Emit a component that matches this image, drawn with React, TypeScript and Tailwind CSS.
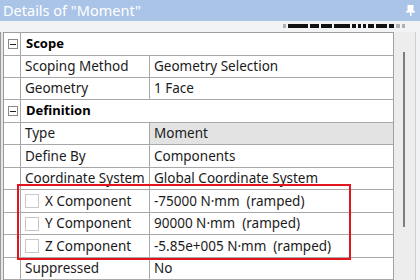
import React from "react";

type Row =
  | { kind: "group"; label: string; h: string }
  | { kind: "prop"; label: string; value: string; h: string; check?: boolean; shaded?: boolean };

const rows: Row[] = [
  { kind: "group", label: "Scope", h: "h-[23px]" },
  { kind: "prop", label: "Scoping Method", value: "Geometry Selection", h: "h-[22px]" },
  { kind: "prop", label: "Geometry", value: "1 Face", h: "h-[22px]" },
  { kind: "group", label: "Definition", h: "h-[23px]" },
  { kind: "prop", label: "Type", value: "Moment", h: "h-[22px]", shaded: true },
  { kind: "prop", label: "Define By", value: "Components", h: "h-[23px]" },
  { kind: "prop", label: "Coordinate System", value: "Global Coordinate System", h: "h-[22px]" },
  { kind: "prop", label: "X Component", value: "-75000 N·mm  (ramped)", h: "h-[23px]", check: true },
  { kind: "prop", label: "Y Component", value: "90000 N·mm  (ramped)", h: "h-[22px]", check: true },
  { kind: "prop", label: "Z Component", value: "-5.85e+005 N·mm  (ramped)", h: "h-[23px]", check: true },
  { kind: "prop", label: "Suppressed", value: "No", h: "h-[22px]" },
];

// black dashes of the busy bar under the title
const dashes = [
  { w: "w-[3px]", c: "bg-[#b0b0b0]" },
  { w: "w-[20px]", c: "bg-[#111]" },
  { w: "w-[9px]", c: "bg-[#111]" },
  { w: "w-[11px]", c: "bg-[#111]" },
  { w: "w-[16px]", c: "bg-[#111]" },
  { w: "w-[4px]", c: "bg-[#111]" },
  { w: "w-[3px]", c: "bg-[#111]" },
  { w: "w-[3px]", c: "bg-[#111]" },
  { w: "w-[6px]", c: "bg-[#111]" },
  { w: "w-[11px]", c: "bg-[#111]" },
  { w: "w-[5px]", c: "bg-[#111]" },
  { w: "w-[4px]", c: "bg-[#b0b0b0]" },
  { w: "w-[3px]", c: "bg-[#b0b0b0]" },
];

function Pin() {
  return (
    <svg width="9" height="11" viewBox="0 0 9 11" className="shrink-0">
      <rect x="2" y="0.5" width="5" height="6" fill="white" stroke="white" />
      <rect x="0" y="6" width="9" height="1.5" fill="white" />
      <rect x="4" y="7" width="1.5" height="4" fill="white" />
    </svg>
  );
}

function Minus() {
  return (
    <div className="w-[10px] h-[10px] border border-[#8a8a8a] bg-white flex items-center justify-center">
      <div className="w-[6px] h-[1px] bg-[#222]" />
    </div>
  );
}

export default function App() {
  return (
    <div
      className="w-[420px] h-[280px] overflow-hidden bg-[#f2f3f5] relative"
      style={{ fontFamily: '"Noto Sans", "Open Sans", sans-serif' }}
    >
      {/* Title bar */}
      <div className="h-[21px] bg-[#a9c4e6] flex items-center justify-between pl-[3px] pr-[5px]">
        <span className="text-white text-[14.5px] leading-none">Details of "Moment"</span>
        <Pin />
      </div>

      {/* Busy strip */}
      <div className="h-[11px] pt-[3px] pl-[283px]">
        <div className="flex gap-[2px]">
          {dashes.map((d, i) => (
            <div key={i} className={`${d.w} ${d.c} h-[4px]`} />
          ))}
        </div>
      </div>

      {/* Body */}
      <div className="flex">
        <div className="w-[4px] h-[260px] border-l border-r border-[#9a9a9a] bg-[#e6e6e6]" />
        <div className="w-[389px] border-t border-[#9f9f9f] bg-white text-[13.5px] text-[#1b1b1b]">
          {rows.map((r, i) =>
            r.kind === "group" ? (
              <div key={i} className={`${r.h} flex border-b border-[#a8a8a8]`}>
                <div className="w-[16px] flex items-center justify-center pl-[1px]">
                  <Minus />
                </div>
                <div className="flex-1 border-l border-[#a8a8a8] flex items-center pl-[5px] font-bold text-[13px] text-black">
                  {r.label}
                </div>
              </div>
            ) : (
              <div key={i} className={`${r.h} flex border-b border-[#a8a8a8]`}>
                <div className="w-[16px]" />
                <div className="w-[130px] border-l border-r border-[#a8a8a8] flex items-center pl-[4px] whitespace-nowrap overflow-hidden">
                  {r.check && (
                    <div className="w-[14px] h-[14px] border border-[#c8c8c8] mr-[6px] shrink-0" />
                  )}
                  {r.label}
                </div>
                <div
                  className={`flex-1 flex items-center pl-[4px] whitespace-pre ${
                    r.shaded ? "bg-[#e3e3e3]" : ""
                  }`}
                >
                  {r.value}
                </div>
              </div>
            )
          )}
        </div>
        <div className="w-[1px] h-[260px] bg-[#a0a0a0]" />
        {/* Scrollbar */}
        <div className="w-[22px] h-[260px] bg-[#ededed] pl-[9px] pt-[20px] border-r border-[#cfcfcf]">
          <div className="w-[2px] h-[175px] bg-[#7d7d7d]" />
        </div>
      </div>

      {/* Highlight box */}
      <div className="absolute left-[17px] top-[184px] w-[334px] h-[76px] border-2 border-[#e3151c]" />
    </div>
  );
}
